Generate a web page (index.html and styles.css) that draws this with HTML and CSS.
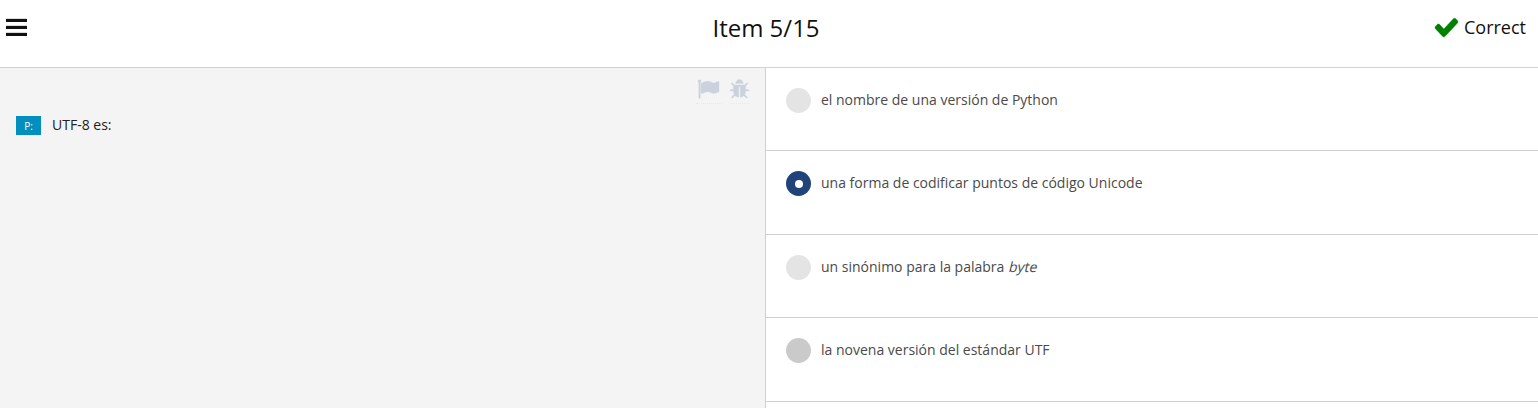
FILE: index.html
```html
<!DOCTYPE html>
<html lang="es">
<head>
<meta charset="utf-8">
<title>Item 5/15</title>
<link rel="stylesheet" href="styles.css">
</head>
<body>
<header class="topbar">
  <div class="menu" aria-label="Menu"><i></i><i></i><i></i></div>
  <h1 class="title">Item 5/15</h1>
  <div class="status">
    <svg class="check" viewBox="121 388 1550 1134" preserveAspectRatio="none"><path d="M1671 566q0 40-28 68l-724 724-136 136q-28 28-68 28t-68-28l-136-136-362-362q-28-28-28-68t28-68l136-136q28-28 68-28t68 28l294 295 656-657q28-28 68-28t68 28l136 136q28 28 28 68z"/></svg>
    <span>Correct</span>
  </div>
</header>
<main class="content">
  <section class="question">
    <div class="tools">
      <span class="tool tool-flag"><svg class="flag" viewBox="64 128 1728 1536"><path d="M320 256q0 72-64 110v1266q0 13-9.500 22.500t-22.500 9.500h-64q-13 0-22.500-9.500t-9.500-22.500v-1266q-64-38-64-110 0-53 37.500-90.500t90.500-37.500 90.500 37.500 37.500 90.500zm1472 64v763q0 25-12.500 38.500t-39.500 27.500q-215 116-369 116-61 0-123.500-22t-108.500-48-115.500-48-142.500-22q-192 0-464 146-17 9-33 9-26 0-45-19t-19-45v-742q0-32 31-55 21-14 79-43 236-120 421-120 107 0 200 29t219 88q38 19 88 19 54 0 117.500-21t110-47 88-47 54.500-21q26 0 45 19t19 45z"/></svg></span>
      <span class="tool tool-bug"><svg class="bug" viewBox="96 128 1600 1536"><path d="M1696 960q0 26-19 45t-45 19h-224q0 171-67 290l208 209q19 19 19 45t-19 45q-18 19-45 19t-45-19l-198-197q-5 5-15 13t-42 28.500-65 36.500-82 29-97 13v-896h-128v896q-51 0-101.500-13.500t-87-33-66-39-43.500-32.500l-15-14-183 207q-20 21-48 21-24 0-43-16-19-18-20.500-44.500t15.500-46.500l202-227q-58-114-58-274h-224q-26 0-45-19t-19-45 19-45 45-19h224v-294l-173-173q-19-19-19-45t19-45 45-19 45 19l173 173h844l173-173q19-19 45-19t45 19 19 45-19 45l-173 173v294h224q26 0 45 19t19 45zm-480-576h-640q0-133 93.500-226.500t226.500-93.500 226.500 93.500 93.500 226.500z"/></svg></span>
    </div>
    <div class="prompt"><span class="tag">P:</span><span>UTF-8 es:</span></div>
  </section>
  <section class="answers">
    <div class="answer"><span class="radio"></span><span>el nombre de una versión de Python</span></div>
    <div class="answer tall"><span class="radio selected"></span><span>una forma de codificar puntos de código Unicode</span></div>
    <div class="answer"><span class="radio"></span><span>un sinónimo para la palabra <em>byte</em></span></div>
    <div class="answer tall"><span class="radio hover"></span><span>la novena versión del estándar UTF</span></div>
  </section>
</main>
</body>
</html>
```
FILE: styles.css
```css
* { box-sizing: border-box; }
body {
  margin: 0;
  height: 408px;
  overflow: hidden;
  background: #fff;
  color: #111;
  font-family: "Open Sans", "Noto Sans", sans-serif;
  font-size: 14px;
}
.topbar {
  display: grid;
  grid-template-columns: 1fr auto 1fr;
  height: 68px;
  padding: 0 12px 0 6px;
  border-bottom: 1px solid #d0d0d0;
}
.menu {
  display: flex;
  flex-direction: column;
  gap: 4px;
  padding-top: 19px;
}
.menu i {
  width: 21px;
  height: 3px;
  background: #111;
  box-shadow: 0 -1px #dcdcdc;
}
.title {
  margin: 0;
  padding-top: 11px;
  font-size: 24px;
  font-weight: 400;
  line-height: 33px;
}
.status {
  display: flex;
  justify-content: flex-end;
  align-items: flex-start;
  gap: 6px;
  padding-top: 15px;
  font-size: 18px;
  line-height: 25px;
}
.check {
  width: 23px;
  height: 18px;
  margin-top: 4px;
  overflow: visible;
  fill: #008000;
  stroke: #008000;
  stroke-width: 25px;
}
.content { display: flex; height: 340px; }
.question {
  width: 766px;
  border-right: 1px solid #d0d0d0;
  background: #f4f4f4;
}
.tools {
  display: flex;
  justify-content: flex-end;
  gap: 8px;
  height: 36px;
  padding: 11px 16px 0 0;
}
.tool { height: 25px; border-bottom: 1px dotted #e6e8eb; }
.tool svg {
  display: block;
  overflow: visible;
  fill: #cbd2de;
  stroke: #cbd2de;
  stroke-width: 25px;
}
.tool-flag { width: 26px; padding-left: 2px; }
.flag { width: 21px; height: 20px; }
.bug { width: 19px; height: 19px; margin-top: 1px; }
.prompt {
  display: flex;
  align-items: center;
  gap: 11px;
  padding: 11px 16px 0;
  line-height: 20px;
  color: #222;
}
.tag {
  width: 25px;
  height: 19px;
  background: #008fbe;
  color: #fff;
  font-size: 10px;
  line-height: 20px;
  text-align: center;
}
.answers { flex: 1; color: #4a4a4a; }
.answer {
  display: flex;
  align-items: flex-start;
  gap: 10px;
  height: 83px;
  padding: 20px;
  border-bottom: 1px solid #d0d0d0;
  line-height: 24px;
}
.answer em {
  display: inline-block;
  font-style: normal;
  transform: skewX(-14deg);
  transform-origin: 0 17px;
}
.tall { height: 84px; }
.radio {
  width: 25px;
  height: 25px;
  border-radius: 50%;
  background: #e4e4e4;
}
.selected {
  display: grid;
  place-items: center;
  background: #204379;
}
.selected::after {
  content: "";
  width: 8px;
  height: 8px;
  border-radius: 50%;
  background: #fff;
}
.hover { background: #cacaca; }
```
